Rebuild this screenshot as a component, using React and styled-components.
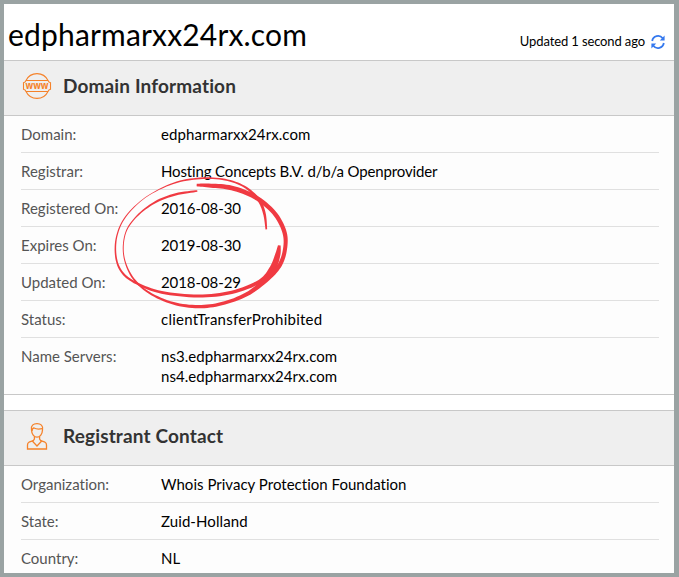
import React from 'react';
import styled, { createGlobalStyle } from 'styled-components';

const GlobalStyle = createGlobalStyle`
	* {
		box-sizing: border-box;
	}
	body {
		margin: 0;
		font-family: Lato, sans-serif;
		font-variant-ligatures: none;
		background: #9aa3a3;
	}
`;

const Page = styled.div`
	position: relative;
	width: 679px;
	height: 577px;
	overflow: hidden;
	border: solid #9aa3a3;
	border-width: 4px 5px 4px 4px;
	background: #fff;
	color: #000;
`;

const TitleBar = styled.header`
	display: flex;
	justify-content: space-between;
	height: 56px;
	padding: 0 9px 0 4px;
`;

const Title = styled.h1`
	margin: 0;
	padding-top: 10px;
	font-size: 30px;
	line-height: 40px;
	font-weight: 400;
	letter-spacing: .17px;
	white-space: nowrap;
`;

const Updated = styled.div`
	display: flex;
	align-items: center;
	gap: 6px;
	height: 20px;
	margin-top: 28px;
	font-size: 13px;
	line-height: 20px;
	letter-spacing: -.12px;
	white-space: nowrap;
	span {
		padding-bottom: 2px;
	}
`;

const Card = styled.section`
	margin-bottom: 15px;
	border: solid #c8c8c8;
	border-width: 1px 0;
	background: #fdfdfd;
`;

const CardHeader = styled.div`
	display: flex;
	align-items: center;
	height: 55px;
	padding: 0 18px;
	border-bottom: 1px solid #c8c8c8;
	background: #efefef;
	svg {
		display: block;
		margin: -4px 11px 0 0;
	}
`;

const CardTitle = styled.h2`
	margin: 0;
	padding-bottom: 4px;
	color: #333;
	font-size: 19px;
	line-height: 26px;
	font-weight: 700;
	letter-spacing: .14px;
`;

const Rows = styled.div`
	padding: 0 15px 0 17px;
`;

const Row = styled.div`
	display: flex;
	min-height: 37px;
	padding: 8px 0;
	border-bottom: 1px solid #e0e0e0;
	font-size: 15px;
	line-height: 20px;
	&:last-child {
		border-bottom: 0;
	}
`;

const Label = styled.div`
	width: 140px;
	color: #555;
`;

const Value = styled.div`
	letter-spacing: ${props => props.$tracking || 0}px;
	white-space: pre-line;
`;

const Marker = styled.svg`
	position: absolute;
	left: 101px;
	top: 166px;
	fill: #f03a42;
	pointer-events: none;
`;

// x, y, pen width
const INNER_STROKE = [
	[484, 178, 5], [478, 130, 8], [460, 88, 9], [418, 50, 6], [360, 29, 5], [285, 25, 5],
	[205, 40, 4], [122, 82, 2], [62, 140, 3], [35, 200, 4], [33, 262, 5], [52, 308, 6],
	[95, 340, 7], [170, 367, 8], [280, 378, 9], [380, 367, 10], [465, 334, 12],
	[503, 294, 18], [518, 255, 16], [523, 226, 8],
];
const OUTER_STROKE = [
	[275, 45, 8], [318, 47, 12], [380, 54, 14], [450, 81, 14], [507, 128, 13], [537, 182, 13],
	[541, 230, 12], [526, 282, 13], [488, 325, 15], [425, 373, 12], [350, 401, 10],
	[280, 410, 10], [205, 400, 8], [132, 368, 6], [81, 320, 5], [56, 255, 3],
	[62, 188, 3], [96, 138, 4], [150, 97, 6], [212, 73, 7], [277, 63, 5],
];

const spline = (a, b, c, d, t) => 0.5 * (
	(2 * b) + ((c - a) * t)
	+ (((2 * a) - (5 * b) + (4 * c) - d) * t * t)
	+ (((3 * b) - a - (3 * c) + d) * t * t * t)
);

// turns pen points into a filled outline, so that the line can swell and thin
const penPath = (pts) => {
	const line = [];
	for (let i = 0; i < pts.length - 1; i += 1) {
		const a = pts[Math.max(i - 1, 0)];
		const d = pts[Math.min(i + 2, pts.length - 1)];
		for (let s = 0; s < 8; s += 1) {
			line.push([0, 1, 2].map(k => spline(a[k], pts[i][k], pts[i + 1][k], d[k], s / 8)));
		}
	}
	line.push(pts[pts.length - 1]);
	const side = sign => line.map(([x, y, w], i) => {
		const p = line[Math.max(i - 1, 0)];
		const n = line[Math.min(i + 1, line.length - 1)];
		const len = Math.hypot(n[0] - p[0], n[1] - p[1]);
		const off = (sign * w) / 2 / len;
		return `${(x - ((n[1] - p[1]) * off)).toFixed(1)},${(y + ((n[0] - p[0]) * off)).toFixed(1)}`;
	});
	return `M${side(1).concat(side(-1).reverse()).join('L')}Z`;
};

const RefreshIcon = () => (
	<svg width="14" height="14" viewBox="0 0 14 14" fill="none" stroke="#3478ee" strokeWidth="1.8">
		<path d="M1.2 6A5.9 5.9 0 0 1 11.7 3.3M12.8 8A5.9 5.9 0 0 1 2.3 10.7" />
		<path fill="#3478ee" stroke="none" d="M13.6.5v5H8.8zM.4 13.5v-5h4.8z" />
	</svg>
);

const WwwText = styled.text`
	fill: #f5822a;
	stroke: none;
	font: 700 10px "Open Sans", sans-serif;
	text-anchor: middle;
`;

const WwwIcon = () => (
	<svg width="30" height="30" viewBox="0 0 30 30" fill="none" stroke="#f5822a" strokeWidth="1.1">
		<path d="M4 9.5A12.2 12.2 0 0 1 26 9.5M4 20.5A12.2 12.2 0 0 0 26 20.5" />
		<path d="M4 9.5H26Q26.3 11.2 28.5 11.7V18.3Q26.3 18.8 26 20.5H4Q3.7 18.8 1.5 18.3V11.7Q3.7 11.2 4 9.5Z" />
		<WwwText x="15" y="17.8" textLength="23" lengthAdjust="spacingAndGlyphs">www</WwwText>
	</svg>
);

const PersonIcon = () => (
	<svg width="30" height="30" viewBox="0 -1 30 30" fill="none" stroke="#f5822a" strokeWidth="1.3">
		<path d="M9.5 8C8.5 3.5 11.5 1.6 15 1.6S21.5 3.5 20.5 8C20.3 12 18 15.2 15 15.2S9.7 12 9.5 8Z" />
		<path d="M10 9C10.2 7.2 11 6 12 6C14.5 7.3 17.5 7.2 20.2 6.6" />
		<path d="M12.4 14.5V17L10.7 19.5L15 24L19.3 19.5L17.6 17V14.5" />
		<path d="M11.2 18.7L7 20.2Q5.5 21 5.5 23V27H24.5V23Q24.5 21 23 20.2L18.8 18.7" />
	</svg>
);

const Section = ({ icon, title, rows }) => (
	<Card>
		<CardHeader>
			{icon}
			<CardTitle>{title}</CardTitle>
		</CardHeader>
		<Rows>
			{rows.map(([label, value, tracking]) => (
				<Row key={label}>
					<Label>{label}:</Label>
					<Value $tracking={tracking}>{value}</Value>
				</Row>
			))}
		</Rows>
	</Card>
);

const DOMAIN_ROWS = [
	['Domain', 'edpharmarxx24rx.com', 0.08],
	['Registrar', 'Hosting Concepts B.V. d/b/a Openprovider', -0.14],
	['Registered On', '2016-08-30', -0.08],
	['Expires On', '2019-08-30', -0.08],
	['Updated On', '2018-08-29', -0.08],
	['Status', 'clientTransferProhibited', 0.23],
	['Name Servers', 'ns3.edpharmarxx24rx.com\nns4.edpharmarxx24rx.com', 0.05],
];

const CONTACT_ROWS = [
	['Organization', 'Whois Privacy Protection Foundation', 0.02],
	['State', 'Zuid-Holland', 0.08],
	['Country', 'NL'],
];

const App = () => (
	<Page>
		<GlobalStyle />
		<TitleBar>
			<Title>edpharmarxx24rx.com</Title>
			<Updated>
				<span>Updated 1 second ago</span>
				<RefreshIcon />
			</Updated>
		</TitleBar>
		<Section icon={<WwwIcon />} title="Domain Information" rows={DOMAIN_ROWS} />
		<Section icon={<PersonIcon />} title="Registrant Contact" rows={CONTACT_ROWS} />
		<Marker width="200" height="145" viewBox="0 0 600 435">
			<path d={penPath(INNER_STROKE)} />
			<path d={penPath(OUTER_STROKE)} />
		</Marker>
	</Page>
);

export default App;
